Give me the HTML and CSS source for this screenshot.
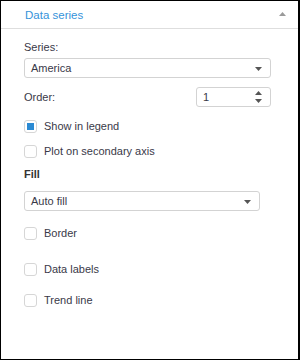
FILE: index.html
```html
<!DOCTYPE html>
<html>
<head>
<meta charset="utf-8">
<link rel="stylesheet" href="styles.css">
</head>
<body>
<div class="panel">
  <div class="panel-header">
    <span class="panel-title">Data series</span>
    <svg class="collapse" width="7" height="4" viewBox="0 0 7 4"><path d="M3.5 0 L7 4 L0 4 Z" fill="#9a9a9a"/></svg>
  </div>
  <div class="panel-body">
    <div class="label series-label">Series:</div>
    <div class="select wide">
      <span>America</span>
      <svg class="caret" width="7" height="4" viewBox="0 0 7 4"><path d="M0 0 L7 0 L3.5 4 Z" fill="#555"/></svg>
    </div>
    <div class="order-row">
      <span class="label">Order:</span>
      <div class="spinner">
        <span>1</span>
        <svg class="spin" width="7" height="12" viewBox="0 0 7 12"><path d="M3.5 0 L7 4 L0 4 Z M0 8 L7 8 L3.5 12 Z" fill="#555"/></svg>
      </div>
    </div>
    <label class="check first"><span class="box checked"></span>Show in legend</label>
    <label class="check second"><span class="box"></span>Plot on secondary axis</label>
    <div class="section">Fill</div>
    <div class="select fill">
      <span>Auto fill</span>
      <svg class="caret" width="7" height="4" viewBox="0 0 7 4"><path d="M0 0 L7 0 L3.5 4 Z" fill="#555"/></svg>
    </div>
    <label class="check border-row"><span class="box"></span>Border</label>
    <label class="check labels-row"><span class="box"></span>Data labels</label>
    <label class="check trend-row"><span class="box"></span>Trend line</label>
  </div>
</div>
</body>
</html>
```
FILE: styles.css
```css
* { box-sizing: border-box; }
html, body { margin: 0; padding: 0; background: #fff; }
body {
  font-family: "Liberation Sans", Arial, sans-serif;
  font-size: 11px;
  color: #393948;
}
.panel {
  width: 300px;
  height: 360px;
  border: 1px solid #000;
  border-right-width: 2px;
  background: #fff;
  display: flex;
  flex-direction: column;
}
.panel-header {
  height: 28px;
  border-bottom: 1px solid #dedede;
  display: flex;
  align-items: center;
  justify-content: space-between;
  padding: 0 12px 0 24px;
  flex: none;
}
.panel-title {
  color: #3593da;
  font-size: 11.5px;
  line-height: 16px;
}
.collapse { margin-top: -2px; }
.panel-body {
  padding: 0 0 0 23px;
  display: flex;
  flex-direction: column;
}
.label { line-height: 16px; }
.series-label { margin-top: 10px; }
.select {
  height: 20px;
  border: 1px solid #d3d3d3;
  border-radius: 3px;
  display: flex;
  align-items: center;
  justify-content: space-between;
  padding: 0 8px 0 6px;
  line-height: 16px;
}
.select.wide { width: 247px; margin-top: 3px; }
.select.fill { width: 236px; margin-top: 9px; }
.caret { margin-top: 1px; }
.order-row {
  margin-top: 9px;
  height: 20px;
  width: 247px;
  display: flex;
  align-items: center;
  justify-content: space-between;
}
.spinner {
  width: 75px;
  height: 20px;
  border: 1px solid #d3d3d3;
  border-radius: 3px;
  display: flex;
  align-items: center;
  justify-content: space-between;
  padding: 0 8px 0 6px;
}
.check {
  display: flex;
  align-items: center;
  height: 16px;
  line-height: 16px;
}
.box {
  width: 13px;
  height: 13px;
  border: 1px solid #d6d6d6;
  border-radius: 3px;
  margin-right: 7px;
  display: flex;
  align-items: center;
  justify-content: center;
  flex: none;
}
.box.checked::after {
  content: "";
  width: 7px;
  height: 7px;
  background: #2b8ad3;
}
.check.first { margin-top: 11px; }
.check.second { margin-top: 9px; }
.section { font-weight: bold; line-height: 16px; margin-top: 7px; color: #333; }
.check.border-row { margin-top: 14px; }
.check.labels-row { margin-top: 20px; }
.check.trend-row { margin-top: 15px; }
```
